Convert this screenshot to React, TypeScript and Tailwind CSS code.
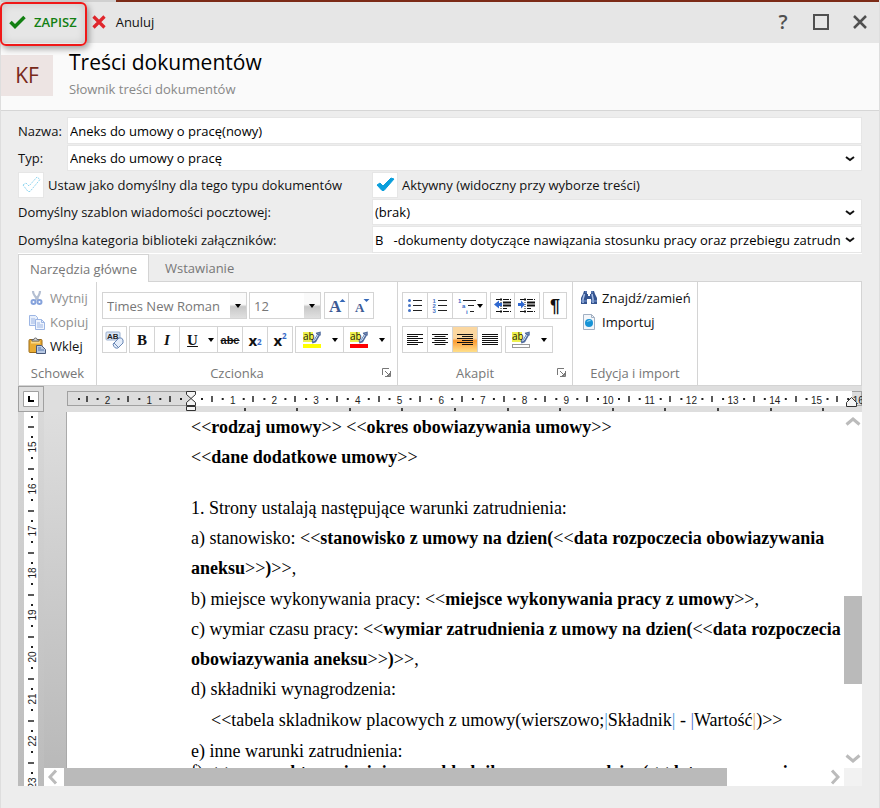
import type { ReactNode } from "react";

const CM = 42;

const fieldClass = "w-full border border-[#e6e6e6] bg-white px-0.5 text-[13px] text-black outline-none";

function Field({ id, value, tall }: { id: string; value: string; tall?: boolean }) {
  return (
    <div className="relative min-w-0 flex-1">
      <select id={id} defaultValue={value} className={`${fieldClass} block appearance-none pr-5 ${tall ? "h-[27px]" : "h-[26px]"}`}>
        <option>{value}</option>
      </select>
      <svg viewBox="0 0 10 6" className="pointer-events-none absolute top-[11px] right-[7px] h-[6px] w-[10px]" fill="none" stroke="#111" strokeWidth="2">
        <path d="M1 1l4 3 4-3" />
      </svg>
    </div>
  );
}

function CheckField({ id, label, checked }: { id: string; label: string; checked?: boolean }) {
  return (
    <div className="flex items-center gap-1">
      <div className="relative">
        <input id={id} type="checkbox" defaultChecked={checked} className="block size-[26px] appearance-none border border-[#e6e6e6] bg-white" />
        <svg viewBox="0 0 26 26" className="pointer-events-none absolute inset-0 size-[26px]">
          <path
            d={checked ? "M5 13l3-2 3 3 8-8 3 1L12 18.500h-2z" : "M5 13l3-2 3 3 8-9 3 2.500L12 19.500h-2z"}
            fill={checked ? "#0a9fdc" : "#fff"}
            stroke={checked ? "#0a9fdc" : "#8fd6f0"}
            strokeDasharray={checked ? undefined : "2 1"}
          />
        </svg>
      </div>
      <label htmlFor={id} className="text-[13px]">{label}</label>
    </div>
  );
}

function Caret() {
  return (
    <svg viewBox="0 0 6 4" className="h-1 w-1.5 shrink-0">
      <path d="M0 0h6L3 4z" fill="#000" />
    </svg>
  );
}

function Tool({ label, className, children }: { label: string; className: string; children: ReactNode }) {
  return (
    <button type="button" aria-label={label} title={label} className={`flex h-full items-center justify-center ${className}`}>
      {children}
    </button>
  );
}

function ToolBox({ children }: { children: ReactNode }) {
  return <div className="flex h-[27px] divide-x divide-[#d4d4d4] border border-[#d4d4d4] bg-white">{children}</div>;
}

function Group({ title, width, launcher, children }: { title: string; width: string; launcher?: boolean; children: ReactNode }) {
  return (
    <div className={`flex h-full flex-col justify-between border-r border-[#d4d4d4] ${width}`}>
      {children}
      <div className={`relative flex h-6 items-center justify-center text-[13px] text-[#777] ${launcher ? "pr-5" : ""}`}>
        {title}
        {launcher && (
          <button type="button" aria-label={`${title}: więcej`} className="absolute top-[7px] right-[6px]">
            <svg viewBox="0 0 9 9" className="size-[9px]" fill="none" stroke="#777">
              <path d="M.5 7V.5H7M3 3l4 4M8.500 3v5.500H3M5 7.500h2.500V5" />
            </svg>
          </button>
        )}
      </div>
    </div>
  );
}

function Combo({ label, value, width }: { label: string; value: string; width: string }) {
  return (
    <div className={`relative h-[27px] ${width}`}>
      <select aria-label={label} defaultValue={value} className="h-full w-full appearance-none border border-[#d4d4d4] bg-white pl-1 text-[13px] text-[#777] outline-none">
        <option>{value}</option>
      </select>
      <span className="pointer-events-none absolute inset-y-px right-px flex w-4 items-center justify-center bg-linear-to-b from-[#fafafa] from-45% via-[#c8c8c8] via-55% to-[#e0e0e0]">
        <Caret />
      </span>
    </div>
  );
}

function ScissorsIcon() {
  return (
    <svg viewBox="0 0 18 18" className="size-[18px]" fill="none">
      <path d="M5 2c0 4 2.500 6 5.500 9M12 2c0 4-2 6-4.500 9" stroke="#b4bfd2" strokeWidth="2.200" />
      <circle cx="5.500" cy="13" r="2" stroke="#86a3dc" strokeWidth="2" />
      <circle cx="11.500" cy="13" r="2" stroke="#86a3dc" strokeWidth="2" />
    </svg>
  );
}

function CopyIcon() {
  return (
    <svg viewBox="0 0 18 18" className="size-[18px]" stroke="#9db6e4">
      <path d="M1.500 2.500h6l2 2v8h-8z" fill="#e9f0fc" />
      <path d="M3 6h4M3 8h4M3 10h4" />
      <path d="M7.500 6.500h6l3 3v7h-9z" fill="#eff4fd" />
      <path d="M13.500 6.500v3h3M9 10h3M9 12h6M9 14h6" fill="none" />
    </svg>
  );
}

function PasteIcon() {
  return (
    <svg viewBox="0 0 18 18" className="size-[18px]">
      <rect x="1" y="2.500" width="13" height="13" rx="1" fill="#e9ac34" stroke="#9a6a18" />
      <path d="M3 5.500h9" stroke="#f9d98a" strokeWidth="2" />
      <path d="M4 4V2.500h2a1.500 1.500 0 0 1 3 0h2V4z" fill="#ddd" stroke="#666" />
      <path d="M8.500 8.500h5l4 4v4h-9z" fill="#b9cae4" stroke="#48597a" />
      <path d="M10 11h3M10 13h6" stroke="#5878ae" />
    </svg>
  );
}

function BinocularsIcon() {
  return (
    <svg viewBox="0 0 18 16" className="h-4 w-[18px]">
      <path d="M4 1h3v3h1v2h2V4h1V1h3l1 3 2 4v6h-6V9H7v5H1V8l2-4z" fill="#34548f" />
      <path d="M4.500 4L3 9v4M12 4l1 5v4" stroke="#a9c0e8" strokeWidth="1.500" fill="none" />
      <path d="M1 11h6M11 11h6M5 2h2M11 2h2" stroke="#7896ce" />
    </svg>
  );
}

function ImportIcon() {
  return (
    <svg viewBox="0 0 18 18" className="size-[18px]">
      <path d="M3.500 1.500h8l3 3v12h-11z" fill="#f3f6fa" stroke="#a3b0c2" />
      <path d="M11.500 1.500v3h3" fill="none" stroke="#a3b0c2" />
      <circle cx="9" cy="10" r="4" fill="#1793d6" />
      <path d="M6.500 9q2-3 5-1-3 0-5 1z" fill="#b5f0fb" />
    </svg>
  );
}

function EraserIcon() {
  return (
    <svg viewBox="0 0 20 20" className="size-5">
      <rect x="1" y="2" width="14" height="8" rx="1" fill="#dbe6f5" stroke="#9bb1d2" />
      <text x="2" y="9" fontSize="8" fontWeight="700" fontFamily="Liberation Sans, sans-serif" fill="#222">AB</text>
      <path d="M8 14l6-6q3-1 4 2v3l-5 5q-4 1-5-4z" fill="#e4edfa" stroke="#6987b5" />
      <path d="M9 13l4 4" stroke="#6987b5" />
    </svg>
  );
}

function HighlightIcon({ bar, outlined }: { bar: string; outlined?: boolean }) {
  return (
    <svg viewBox="0 0 20 18" className="h-[18px] w-5">
      <rect x="1" y="1" width="10" height="10" fill="#edf04e" />
      <text x="1" y="9" fontSize="10" fontFamily="Open Sans, sans-serif" fill="#222208">ab</text>
      <path d="M10 11l3-1 4-7" fill="none" stroke="#516c9e" strokeWidth="3" />
      <path d="M11 10l2-1 3-5" fill="none" stroke="#d6e2f5" />
      <path d="M14 2.500l4-1v3" fill="none" stroke="#516c9e" strokeWidth="1.500" />
      <rect x="1.500" y="13.500" width="17" height="3" fill={bar} stroke={outlined ? "#999" : bar} />
    </svg>
  );
}

function GrowIcon({ up }: { up?: boolean }) {
  return (
    <svg viewBox="0 0 18 18" className="size-[18px]">
      <text x={up ? 1 : 3} y="15" fontSize={up ? 17 : 13} fontWeight="700" fontFamily="Liberation Serif, serif" fill="#3c5a94">A</text>
      <path d={up ? "M11.500 5h6l-3-3z" : "M11.500 2h6l-3 3z"} fill="#3568b8" />
    </svg>
  );
}

function ListIcon({ kind }: { kind: "bullets" | "numbers" | "levels" }) {
  if (kind === "levels") {
    return (
      <svg viewBox="0 0 20 18" className="h-[18px] w-5" fontSize="6" fontWeight="700" fontFamily="Liberation Sans, sans-serif" fill="#3568c8">
        <text x="1" y="6">1</text>
        <text x="5" y="11">a</text>
        <text x="9" y="17">i</text>
        <path d="M6 3.500h13M11 8.500h6M13 14.500h4" stroke="#222" />
      </svg>
    );
  }
  return (
    <svg viewBox="0 0 18 18" className="size-[18px]" fontSize="6" fontWeight="700" fontFamily="Liberation Sans, sans-serif" fill="#4472c4">
      {[3.5, 8.5, 13.5].map((y, i) =>
        kind === "bullets" ? <circle key={y} cx="3.500" cy={y} r="1.500" /> : <text key={y} x="1.500" y={y + 2}>{i + 1}</text>
      )}
      <path d="M7 3.500h9M7 8.500h9M7 13.500h9" stroke="#222" />
    </svg>
  );
}

function IndentIcon({ inward }: { inward?: boolean }) {
  return (
    <svg viewBox="0 0 18 18" className="size-[18px]">
      <path d="M2 2.500h15M2 14.500h15M9 11.500h4" stroke="#111" strokeDasharray="6 1" />
      <path d="M9 5.500h8M9 8.500h8" stroke="#111" strokeWidth="2" />
      <path d="M9 11.500h4M7 1v16" stroke="#111" strokeDasharray="1 1" />
      <path d={inward ? "M0 6h3V3.500L7 7.500l-4 4V9H0z" : "M8 6H5V3.500L0 7.500l5 4V9h3z"} fill="#2f68d0" />
    </svg>
  );
}

function AlignIcon({ kind }: { kind: "left" | "center" | "right" | "justify" }) {
  return (
    <svg viewBox="0 0 16 14" className="h-3.5 w-4" stroke="#111">
      {[1.5, 3.5, 5.5, 7.5, 9.5, 11.5].map((y, i) => {
        const w = kind === "justify" || i % 2 === 0 ? 16 : 11;
        const x = kind === "right" ? 16 - w : kind === "center" ? (16 - w) / 2 : 0;
        return <path key={y} d={`M${x} ${y}h${w}`} />;
      })}
    </svg>
  );
}

function HorizontalRuler() {
  const origin = 124;
  const marks = Array.from({ length: 19 }, (_, i) => i - 2);
  const cm = 41.7;
  return (
    <svg width="795" height="26" className="block" fontSize="10" fontFamily="Liberation Sans, sans-serif" textAnchor="middle" fill="#222">
      <rect x=".5" y="5.500" width="794" height="14" fill="#dcdcdc" stroke="#a0a0a0" />
      <rect x={origin} y="5" width="661" height="15" fill="#fff" />
      {marks.map((n) => {
        const x = origin + n * cm;
        return (
          <g key={n}>
            {n !== 0 && <text x={x} y="18">{Math.abs(n)}</text>}
            <path d={`M${x - 11} 13h2M${x + 10} 13h2`} stroke="#222" strokeWidth="2" />
            <path d={`M${Math.round(x - 21)} 10v6`} stroke="#222" strokeWidth="1.500" />
          </g>
        );
      })}
      <path d="M11 13h2" stroke="#222" strokeWidth="2" />
      {Array.from({ length: 12 }, (_, i) => (
        <rect key={i} x={Math.round(origin + (i + 1) * 52.6)} y="22" width="2" height="3" fill="#444" />
      ))}
      <g fill="#f4f4f4" stroke="#333">
        <path d="M119.500 5.500h9v3l-4.500 4-4.500-4zM119.500 19.500v-3l4.500-4 4.500 4v3zM119.500 20.500h9v4h-9z" />
        <path d="M779.500 20.500v-4l5-5 5 5v4z" />
      </g>
    </svg>
  );
}

function VerticalRuler() {
  return (
    <div className="flex w-[26px] shrink-0 overflow-hidden bg-linear-to-b from-[#d9d9d9] to-[#bbb] px-1.5">
      <svg width="14" height="374" className="block bg-white" fontSize="10" fontFamily="Liberation Sans, sans-serif" textAnchor="middle" fill="#222">
        {Array.from({ length: 9 }, (_, i) => {
          const y = 35 + i * CM;
          return (
            <g key={i}>
              <text transform={`translate(12 ${y}) rotate(-90)`}>{15 + i}</text>
              <path d={`M7 ${y - 10}h2M7 ${y + 11}h2`} stroke="#222" strokeWidth="2" />
              <path d={`M4 ${y - 20}h6`} stroke="#222" strokeWidth="1.500" />
            </g>
          );
        })}
        <path d="M7 5h2" stroke="#222" strokeWidth="2" />
      </svg>
    </div>
  );
}

function Arrow({ d }: { d: string }) {
  return (
    <svg viewBox="0 0 18 18" className="size-[18px] shrink-0" fill="none" stroke="#bbb" strokeWidth="3">
      <path d={d} />
    </svg>
  );
}

export default function App() {
  return (
    <main className="min-h-screen border-x border-[#dedede] bg-[#ededed] pb-[22px] font-['Open_Sans','Noto_Sans',sans-serif] text-[13px] leading-[18px] text-[#111]">
      <div className="flex h-0.5">
        <div className="w-[115px] bg-[#d0d0d0]" />
        <div className="flex-1 bg-[#7c2b17]" />
      </div>
      <header>
        <div className="relative flex h-[41px] items-center bg-[#e6e6e6] pr-3 pb-0.5 pl-2">
          <button type="button" className="flex items-center gap-2 font-semibold text-[#138013]">
            <svg viewBox="0 0 17 14" className="h-3.5 w-[17px]" fill="none" stroke="#138013" strokeWidth="3.500">
              <path d="M1.500 7l4.500 4.500L15.500 2" />
            </svg>
            ZAPISZ
          </button>
          <div className="pointer-events-none absolute top-0 -left-px h-[44px] w-[87px] rounded-md border-2 border-[#f01818] shadow-[2px_3px_6px_rgba(0,0,0,0.35),inset_0_0_8px_rgba(0,0,0,0.15)]" />
          <button type="button" className="ml-[15px] flex items-center gap-2.5">
            <svg viewBox="0 0 14 14" className="size-3.5" stroke="#e0262c" strokeWidth="3.200">
              <path d="M1.500 1.500l11 11M12.500 1.500l-11 11" />
            </svg>
            Anuluj
          </button>
          <div className="ml-auto flex items-center gap-6 text-[#505050]">
            <button type="button" aria-label="Pomoc" className="w-3 text-xl leading-5 font-semibold">?</button>
            <button type="button" aria-label="Maksymalizuj">
              <svg viewBox="0 0 16 16" className="size-4" fill="none" stroke="currentColor" strokeWidth="2">
                <path d="M1 1h14v14H1z" />
              </svg>
            </button>
            <button type="button" aria-label="Zamknij">
              <svg viewBox="0 0 14 14" className="size-3.5" stroke="currentColor" strokeWidth="2.500">
                <path d="M1 1l12 12M13 1L1 13" />
              </svg>
            </button>
          </div>
        </div>
        <div className="flex h-[68px] gap-4 border-b border-[#d6d6d6] bg-[#fafafa]">
          <div className="mt-3 flex h-[41px] w-[52px] items-center justify-center bg-[#ede4e3] pb-0.5 text-[21px] font-medium text-[#78291a]">KF</div>
          <div className="pt-[5px]">
            <h1 className="text-[21px] leading-7 text-black">Treści dokumentów</h1>
            <p className="mt-1 text-[#888]">Słownik treści dokumentów</p>
          </div>
        </div>
      </header>

      <form className="mr-[17px] ml-[17px] flex flex-col gap-px pt-1.5">
        <div className="flex items-center">
          <label htmlFor="name" className="w-[49px] shrink-0">Nazwa:</label>
          <input id="name" defaultValue="Aneks do umowy o pracę(nowy)" className={`${fieldClass} h-[27px]`} />
        </div>
        <div className="flex items-center">
          <label htmlFor="type" className="w-[49px] shrink-0">Typ:</label>
          <Field id="type" value="Aneks do umowy o pracę" />
        </div>
        <div className="flex items-center">
          <div className="w-[354px] shrink-0">
            <CheckField id="default" label="Ustaw jako domyślny dla tego typu dokumentów" />
          </div>
          <CheckField id="active" label="Aktywny (widoczny przy wyborze treści)" checked />
        </div>
        <div className="flex items-center">
          <label htmlFor="template" className="w-[354px] shrink-0">Domyślny szablon wiadomości pocztowej:</label>
          <Field id="template" value="(brak)" />
        </div>
        <div className="flex items-center">
          <label htmlFor="category" className="w-[354px] shrink-0">Domyślna kategoria biblioteki załączników:</label>
          <Field id="category" tall value={"B\u00a0\u00a0 -dokumenty dotyczące nawiązania stosunku pracy oraz przebiegu zatrudnienia"} />
        </div>
      </form>

      <section className="mr-[17px] ml-[17px] border-t border-white">
        <div role="tablist" className="flex h-[27px] text-[#777]">
          <button type="button" role="tab" aria-selected="true" className="-mb-px w-[131px] border border-b-0 border-[#d4d4d4] bg-white">Narzędzia główne</button>
          <button type="button" role="tab" aria-selected="false" className="px-4">Wstawianie</button>
        </div>
        <div className="flex h-[105px] border border-[#d4d4d4] bg-white">
          <Group title="Schowek" width="w-[78px]">
            <div className="flex flex-col gap-1.5 pt-[7px] pl-[9px]">
              <button type="button" disabled className="flex items-center gap-1 text-[#909090]"><ScissorsIcon />Wytnij</button>
              <button type="button" disabled className="flex items-center gap-1 text-[#909090]"><CopyIcon />Kopiuj</button>
              <button type="button" className="flex items-center gap-1"><PasteIcon />Wklej</button>
            </div>
          </Group>
          <Group title="Czcionka" width="w-[301px]" launcher>
            <div className="flex flex-col gap-[7px] pt-2.5 pl-[5px]">
              <div className="flex gap-0.5">
                <Combo label="Czcionka" value="Times New Roman" width="w-[145px]" />
                <Combo label="Rozmiar" value="12" width="w-[72px]" />
                <div className="ml-px">
                  <ToolBox>
                    <Tool label="Powiększ czcionkę" className="w-6"><GrowIcon up /></Tool>
                    <Tool label="Zmniejsz czcionkę" className="w-6"><GrowIcon /></Tool>
                  </ToolBox>
                </div>
              </div>
              <div className="flex gap-0.5">
                <ToolBox>
                  <Tool label="Wyczyść formatowanie" className="w-[23px]"><EraserIcon /></Tool>
                </ToolBox>
                <ToolBox>
                  <Tool label="Pogrubienie" className="w-[25px] font-['Liberation_Serif',serif] text-[15px] font-bold">B</Tool>
                  <Tool label="Kursywa" className="w-[25px] font-['Liberation_Serif',serif] text-[15px] font-bold italic">I</Tool>
                  <Tool label="Podkreślenie" className="w-[38px] gap-2.5 pl-1 font-['Liberation_Serif',serif] text-[15px] font-bold"><span className="underline">U</span><Caret /></Tool>
                  <Tool label="Przekreślenie" className="w-[25px] font-['Liberation_Sans',sans-serif] text-[11px] font-bold line-through">abe</Tool>
                  <Tool label="Indeks dolny" className="w-[25px] text-[15px] font-bold">x<sub className="text-[8px] text-[#3568c8]">2</sub></Tool>
                  <Tool label="Indeks górny" className="w-6 text-[15px] font-bold">x<sup className="text-[8px] text-[#3568c8]">2</sup></Tool>
                </ToolBox>
                <ToolBox>
                  <Tool label="Wyróżnienie" className="w-[48px] gap-2.5"><HighlightIcon bar="#ffff00" /><Caret /></Tool>
                  <Tool label="Kolor czcionki" className="w-[46px] gap-2.5"><HighlightIcon bar="#ff0000" /><Caret /></Tool>
                </ToolBox>
              </div>
            </div>
          </Group>
          <Group title="Akapit" width="w-[175px]" launcher>
            <div className="flex flex-col gap-[7px] pt-2.5 pl-1">
              <div className="flex gap-[3px]">
                <ToolBox>
                  <Tool label="Punktory" className="w-[25px]"><ListIcon kind="bullets" /></Tool>
                  <Tool label="Numerowanie" className="w-[25px]"><ListIcon kind="numbers" /></Tool>
                  <Tool label="Lista wielopoziomowa" className="w-[33px]"><ListIcon kind="levels" /><Caret /></Tool>
                </ToolBox>
                <ToolBox>
                  <Tool label="Zmniejsz wcięcie" className="w-6"><IndentIcon /></Tool>
                  <Tool label="Zwiększ wcięcie" className="w-6"><IndentIcon inward /></Tool>
                </ToolBox>
                <ToolBox>
                  <Tool label="Pokaż znaki" className="w-[22px] font-['Liberation_Sans',sans-serif] text-lg font-bold">¶</Tool>
                </ToolBox>
              </div>
              <div className="flex gap-[3px]">
                <ToolBox>
                  <Tool label="Do lewej" className="w-[25px]"><AlignIcon kind="left" /></Tool>
                  <Tool label="Do środka" className="w-[25px]"><AlignIcon kind="center" /></Tool>
                  <Tool label="Do prawej" className="w-[25px] bg-linear-to-b from-[#fbd7a0] from-45% via-[#fb9a2c] via-55% to-[#ffe08a]"><AlignIcon kind="right" /></Tool>
                  <Tool label="Wyjustuj" className="w-[23px]"><AlignIcon kind="justify" /></Tool>
                </ToolBox>
                <ToolBox>
                  <Tool label="Cieniowanie" className="w-[46px] gap-2.5"><HighlightIcon bar="#fff" outlined /><Caret /></Tool>
                </ToolBox>
              </div>
            </div>
          </Group>
          <Group title="Edycja i import" width="w-[125px]">
            <div className="flex flex-col gap-1.5 pt-[7px] pl-[7px]">
              <button type="button" className="flex items-center gap-1"><BinocularsIcon />Znajdź/zamień</button>
              <button type="button" className="flex items-center gap-1"><ImportIcon />Importuj</button>
            </div>
          </Group>
        </div>

        <div className="flex h-[26px] overflow-hidden bg-[#dedede]">
          <div className="mr-[23px] flex size-[26px] shrink-0 items-center justify-center border border-[#a0a0a0]">
            <svg viewBox="0 0 16 16" className="size-4">
              <path d="M.5.5h15v15H.5z" fill="#fff" stroke="#a0a0a0" />
              <path d="M6 5v5h5" fill="none" stroke="#000" strokeWidth="2" />
            </svg>
          </div>
          <HorizontalRuler />
        </div>

        <div className="flex h-[374px]">
          <VerticalRuler />
          <div className="flex min-w-0 flex-1 flex-col">
            <div className="flex min-h-0 flex-1">
              <div className="w-[23px] shrink-0 border-r border-[#aaa] bg-linear-to-b from-[#dedede] to-[#b9b9b9]" />
              <div
                role="textbox"
                aria-label="Treść dokumentu"
                contentEditable
                suppressContentEditableWarning
                className="min-w-0 flex-1 overflow-hidden bg-white pl-[124px] font-['Liberation_Serif',serif] text-[18px] leading-[30px] whitespace-pre text-black outline-none"
              >
                <p>&lt;&lt;<b>rodzaj umowy</b>&gt;&gt; &lt;&lt;<b>okres obowiazywania umowy</b>&gt;&gt;</p>
                <p>&lt;&lt;<b>dane dodatkowe umowy</b>&gt;&gt;</p>
                <p className="mt-[21px]">1. Strony ustalają następujące warunki zatrudnienia:</p>
                <p>a) stanowisko: &lt;&lt;<b>stanowisko z umowy na dzien(</b>&lt;&lt;<b>data rozpoczecia obowiazywania</b></p>
                <p><b>aneksu</b>&gt;&gt;<b>)</b>&gt;&gt;,</p>
                <p className="mt-px">b) miejsce wykonywania pracy: &lt;&lt;<b>miejsce wykonywania pracy z umowy</b>&gt;&gt;,</p>
                <p>c) wymiar czasu pracy: &lt;&lt;<b>wymiar zatrudnienia z umowy na dzien(</b>&lt;&lt;<b>data rozpoczecia</b></p>
                <p><b>obowiazywania aneksu</b>&gt;&gt;<b>)</b>&gt;&gt;,</p>
                <p>d) składniki wynagrodzenia:</p>
                <p className="mt-px pl-5">&lt;&lt;tabela skladnikow placowych z umowy(wierszowo;<span className="text-[#4b9be0]">|</span>Składnik<span className="text-[#4b9be0]">|</span> - <span className="text-[#4b6fd0]">|</span>Wartość<span className="text-[#e0a860]">|</span>)&gt;&gt;</p>
                <p className="mt-px h-[21px]">e) inne warunki zatrudnienia:</p>
                <p>f) &lt;&lt;<b>nazwa aktu zmieniajacego skladnik z umowy na dzien(</b>&lt;&lt;<b>data rozpoczecia</b></p>
              </div>
              <div className="flex w-[18px] shrink-0 flex-col bg-white">
                <Arrow d="M2.500 12.500L9 7l6.500 5.500" />
                <div className="mt-[166px] h-[88px] bg-[#bababa]" />
                <div className="mt-auto"><Arrow d="M2.500 5.500L9 11l6.500-5.500" /></div>
              </div>
            </div>
            <div className="flex h-[18px] bg-white">
              <Arrow d="M12 2.500L6 9l6 6.500" />
              <div className="ml-0.5 w-[81%] shrink-0 bg-[#bababa]" />
              <div className="flex flex-1 justify-end"><Arrow d="M6 2.500L12 9l-6 6.500" /></div>
              <div className="w-[18px] shrink-0 bg-[#f2f2f2]" />
            </div>
          </div>
        </div>
      </section>
    </main>
  );
}
